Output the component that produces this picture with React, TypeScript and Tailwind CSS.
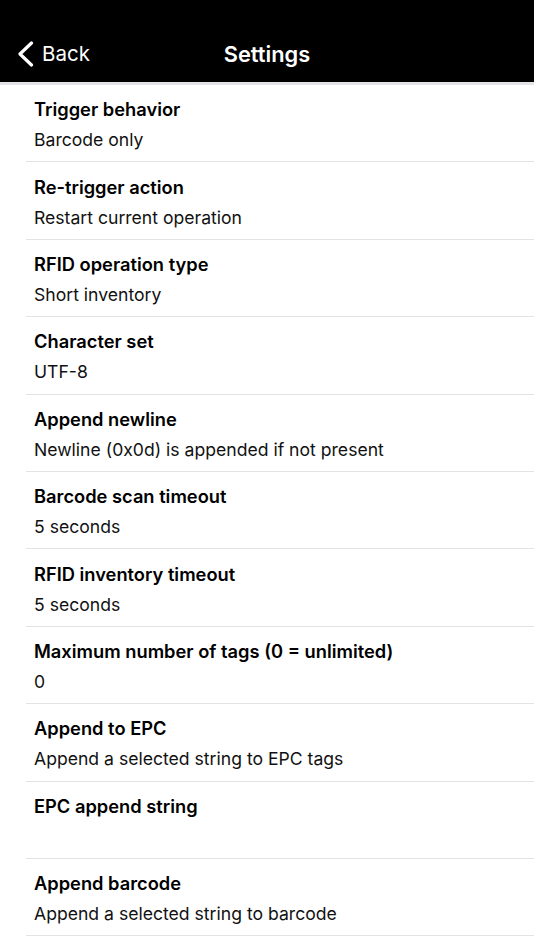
const ROWS: { title: string; value: string }[] = [
  { title: "Trigger behavior", value: "Barcode only" },
  { title: "Re-trigger action", value: "Restart current operation" },
  { title: "RFID operation type", value: "Short inventory" },
  { title: "Character set", value: "UTF-8" },
  { title: "Append newline", value: "Newline (0x0d) is appended if not present" },
  { title: "Barcode scan timeout", value: "5 seconds" },
  { title: "RFID inventory timeout", value: "5 seconds" },
  { title: "Maximum number of tags (0 = unlimited)", value: "0" },
  { title: "Append to EPC", value: "Append a selected string to EPC tags" },
  { title: "EPC append string", value: "" },
  { title: "Append barcode", value: "Append a selected string to barcode" },
];

function SettingRow({ title, value }: { title: string; value: string }) {
  return (
    <div className="pl-[26px]">
      <div className="flex h-[77.4px] flex-col justify-center border-b border-[#e3e3e6] pl-2 pt-[3px]">
        <div className="text-[18.3px] font-semibold leading-[23px] text-black">{title}</div>
        <div className="mt-[7px] h-[23px] text-[17.6px] leading-[23px] text-[#111]">{value}</div>
      </div>
    </div>
  );
}

export default function App() {
  return (
    <div
      className="h-[950px] w-[534px] overflow-hidden bg-white"
      style={{ fontFamily: "Inter, 'Noto Sans', sans-serif" }}
    >
      <header className="relative flex h-[82px] items-end bg-black pb-[14px]">
        <button type="button" className="flex items-center gap-[8px] pl-[17px] text-white">
          <svg width="17" height="26" viewBox="0 0 17 26" fill="none">
            <path d="M14.5 2 L3 13 L14.5 24" stroke="white" strokeWidth="3.2" strokeLinecap="round" strokeLinejoin="round" />
          </svg>
          <span className="text-[20.5px] leading-[28px]">Back</span>
        </button>
        <h1 className="absolute inset-x-0 bottom-[14px] text-center text-[21.8px] font-semibold leading-[28px] text-white">
          Settings
        </h1>
      </header>
      <div className="h-[3px] bg-[#e4e4e8]" />
      <div>
        {ROWS.map((row) => (
          <SettingRow key={row.title} title={row.title} value={row.value} />
        ))}
      </div>
    </div>
  );
}
